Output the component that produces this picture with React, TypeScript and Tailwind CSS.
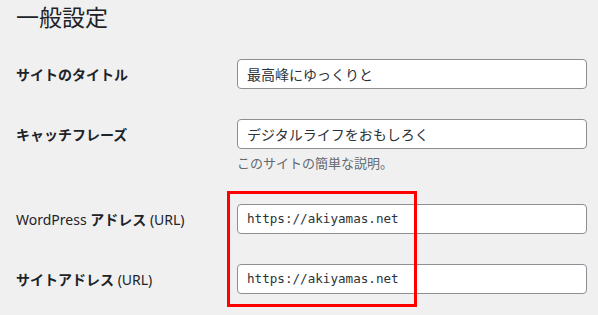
const jp = "font-['Noto_Sans','Noto_Sans_CJK_JP',sans-serif]";

const Field = ({ value, mono }: { value: string; mono?: boolean }) => (
  <div
    className={`h-[30px] w-[350px] rounded-[4px] border border-[#8c8f94] bg-white pl-[9px] flex items-center text-[#2c3338] ${
      mono ? "font-['DejaVu_Sans_Mono',monospace] text-[12.6px]" : `${jp} text-[14px]`
    }`}
  >
    {value}
  </div>
);

const Row = ({ label, children }: { label: React.ReactNode; children: React.ReactNode }) => (
  <div className="flex py-[15px]">
    <div className={`w-[221px] shrink-0 pt-[7px] text-[14px] leading-[1.3] font-bold text-[#1d2327] ${jp}`}>
      {label}
    </div>
    <div>{children}</div>
  </div>
);

export default function App() {
  return (
    <div className={`relative h-[315px] w-[598px] overflow-hidden bg-[#f0f0f1] px-4 ${jp}`}>
      <h1 className="pt-[3px] h-[44px] text-[23px] font-normal leading-[1.3] text-[#1d2327]">一般設定</h1>

      <Row label="サイトのタイトル">
        <Field value="最高峰にゆっくりと" />
      </Row>

      <Row label="キャッチフレーズ">
        <Field value="デジタルライフをおもしろく" />
        <p className="mt-[4px] text-[13px] leading-[21px] text-[#646970]">このサイトの簡単な説明。</p>
      </Row>

      <Row
        label={
          <>
            <span className="font-normal">WordPress</span> アドレス <span className="font-normal">(URL)</span>
          </>
        }
      >
        <Field value="https://akiyamas.net" mono />
      </Row>

      <Row
        label={
          <>
            サイトアドレス <span className="font-normal">(URL)</span>
          </>
        }
      >
        <Field value="https://akiyamas.net" mono />
      </Row>

      <div className="absolute left-[227px] top-[191px] h-[116px] w-[190px] border-[3px] border-[#ff0000]" />
    </div>
  );
}
